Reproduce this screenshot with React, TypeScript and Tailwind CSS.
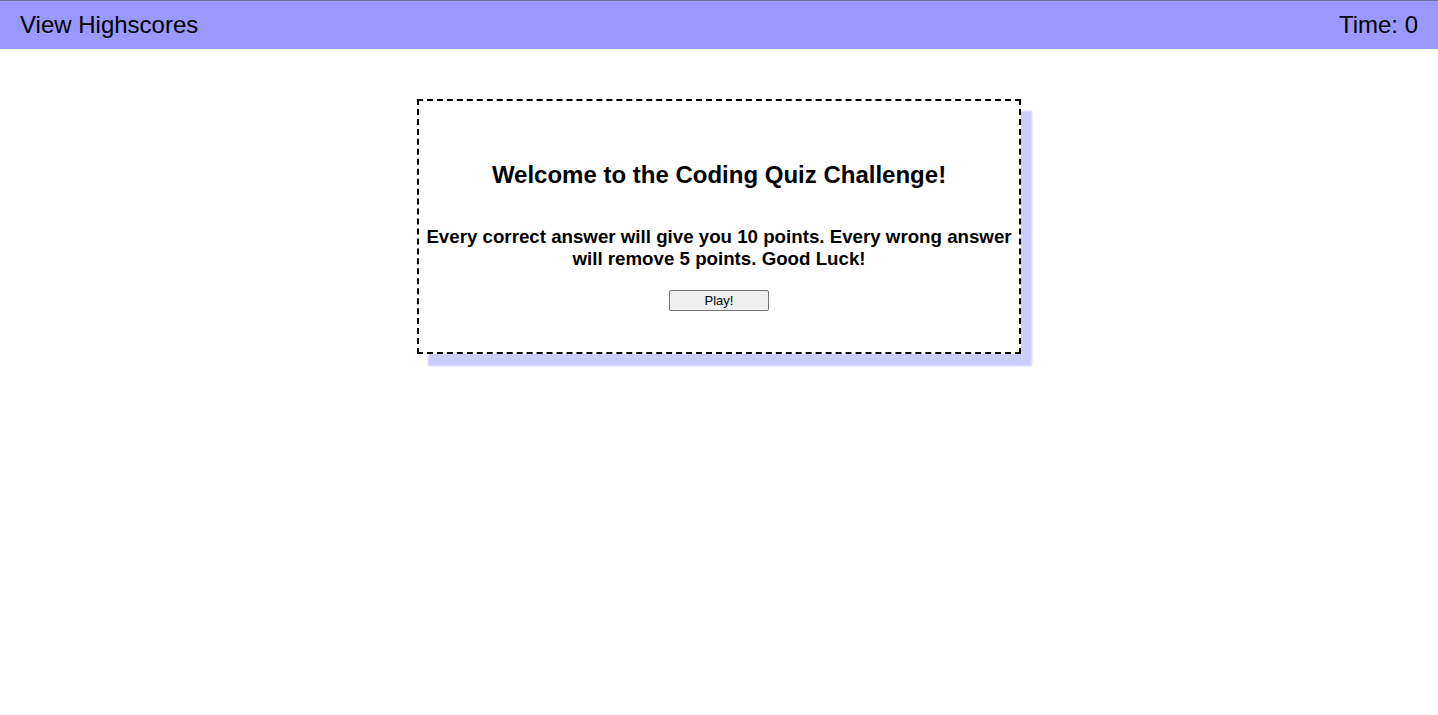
import React from "react";

export default function App() {
  return (
    <div className="min-h-[715px] bg-white text-black" style={{ fontFamily: '"Liberation Sans", Arial, sans-serif' }}>
      <header className="flex h-[49px] items-center justify-between border-t border-[#6c6c8c] bg-[#9999ff] px-5 text-[24px] leading-none">
        <span>View Highscores</span>
        <span>Time: 0</span>
      </header>
      <main className="flex justify-center pt-[50px]">
        <div className="w-[604px] border-2 border-dashed border-black bg-white pb-[40px] pt-[60px] text-center shadow-[11px_12px_2px_#ccccff]">
          <h2 className="text-[24px] font-bold leading-[28px]">Welcome to the Coding Quiz Challenge!</h2>
          <p className="mt-[37px] text-[18.72px] font-bold leading-[22px]">
            Every correct answer will give you 10 points. Every wrong answer will remove 5 points. Good Luck!
          </p>
          <button className="mt-[20px] h-[21px] w-[100px] rounded-[2px] border border-[#767676] bg-[#efefef] text-[13px] leading-none">
            Play!
          </button>
        </div>
      </main>
    </div>
  );
}
